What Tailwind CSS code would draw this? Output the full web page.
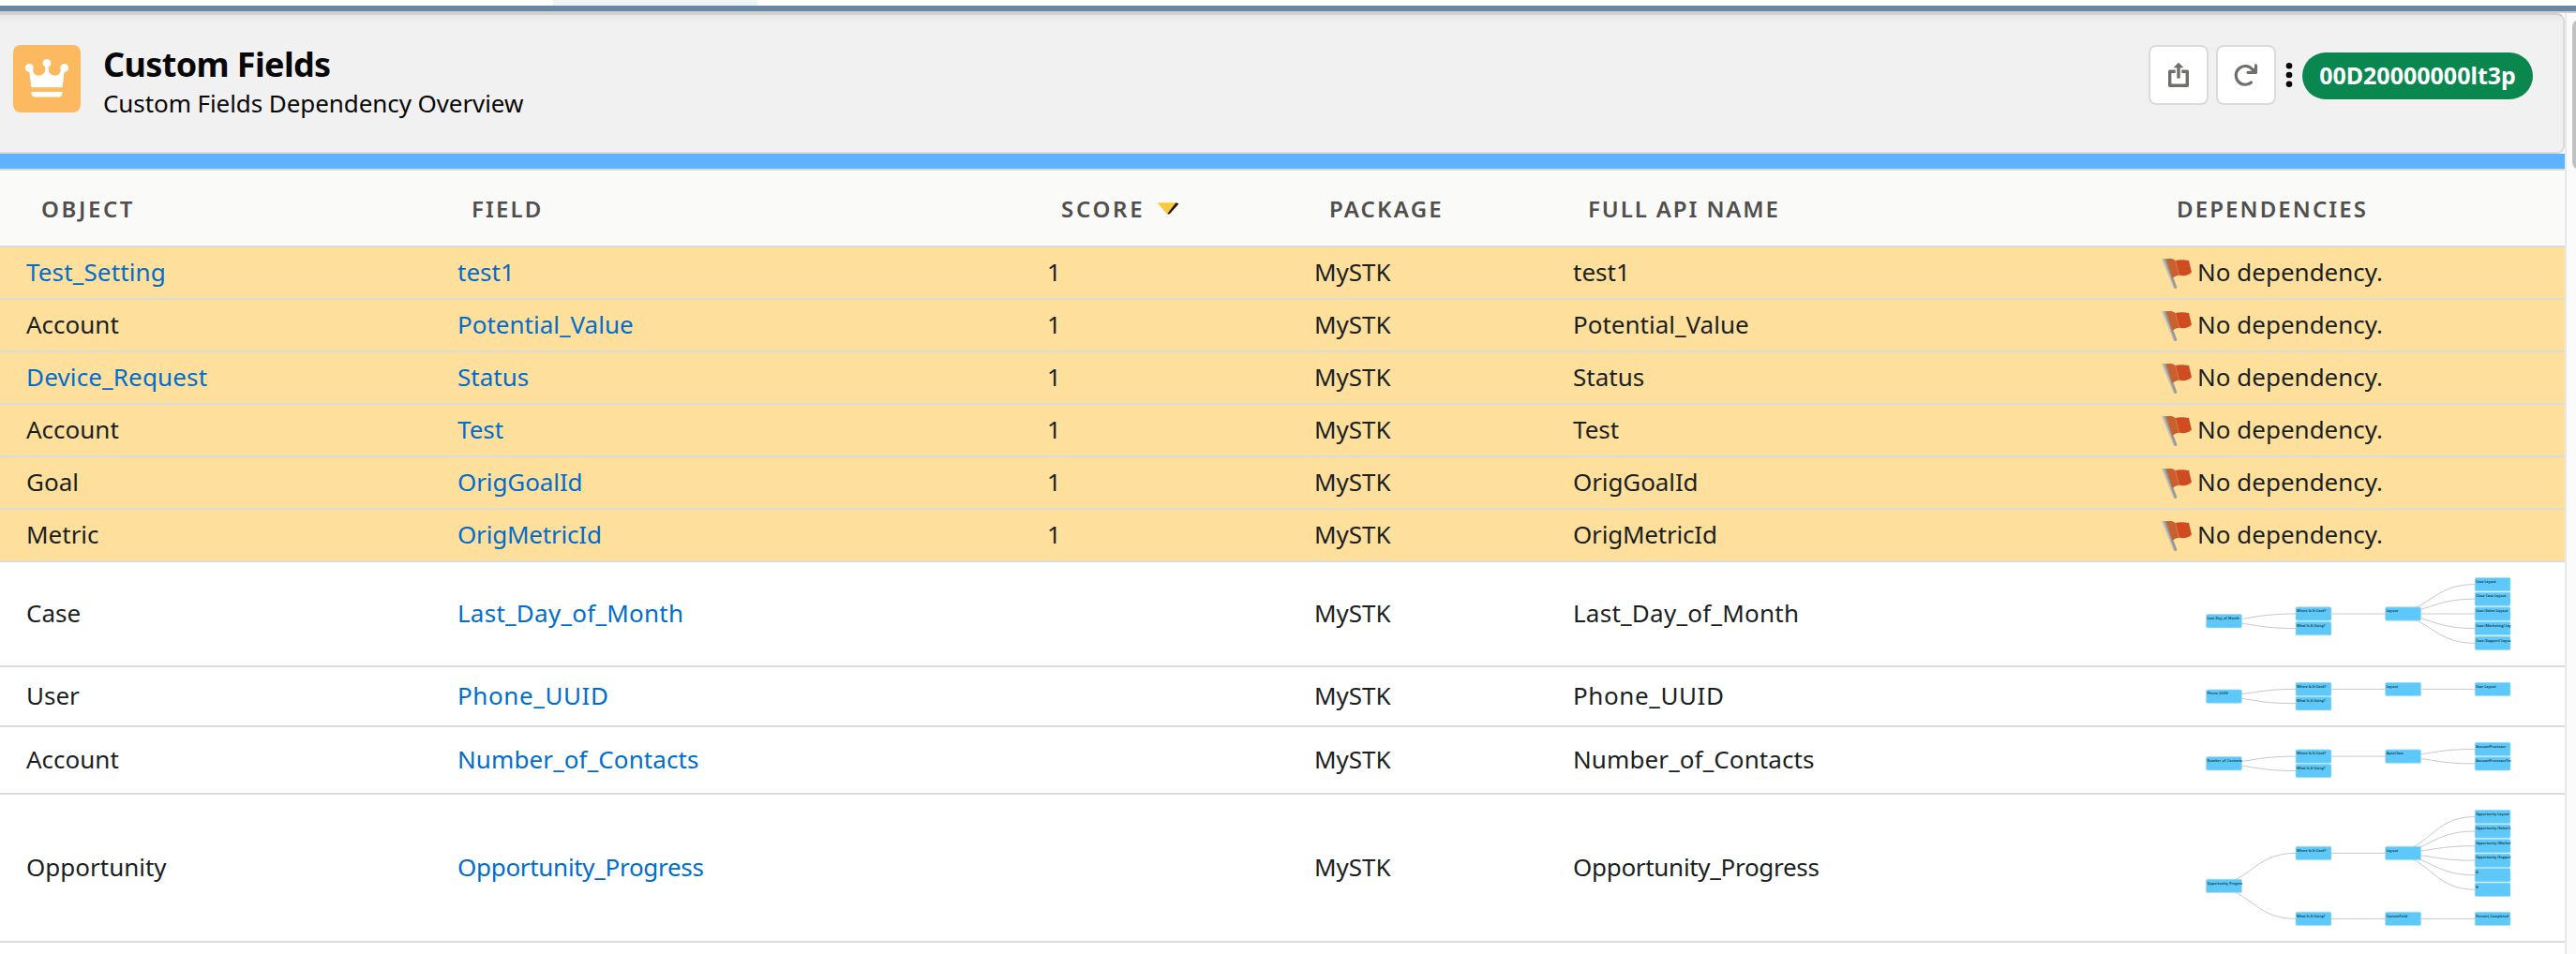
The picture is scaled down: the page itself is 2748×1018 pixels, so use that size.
<!DOCTYPE html>
<html lang="en">
<head>
<meta charset="utf-8">
<title>Custom Fields</title>
<script src="https://cdn.jsdelivr.net/npm/@tailwindcss/browser@4"></script>
</head>
<body class="flex h-[1018px] w-[2748px] flex-col overflow-hidden bg-white font-['Noto_Sans',sans-serif] text-[26px] text-[#1b1f22]">
  <!-- Tab strip edge -->
  <div class="h-1.5 shrink-0 pl-[590px]"><div class="h-full w-[218px] bg-[#eef3f6]"></div></div>
  <div class="h-1.5 shrink-0 bg-[#6888a3]"></div>
  <div class="h-0.5 shrink-0 bg-[#d2d0cf]"></div>

  <div class="flex min-h-0 flex-1">
    <main class="w-[2736px] shrink-0 overflow-hidden">
      <header class="flex h-[150px] items-start justify-between rounded-r-lg border-y-2 border-r-2 border-t-[#d2d0cf] border-r-[#dddbda] border-b-[#dddbda] bg-[#f1f1f1] bg-linear-to-b from-[#e9e9e9] from-0% to-[#f1f1f1] to-[10px] pt-8 pr-8 pl-3.5 text-[#080707]">
        <div class="flex">
          <svg class="size-[72px] rounded-lg bg-[#fcb95f]" viewBox="0 0 72 72" fill="#fff">
            <circle cx="17.3" cy="24.4" r="4.4"/><circle cx="36" cy="19.4" r="4.4"/><circle cx="54.7" cy="24.4" r="4.4"/>
            <path d="M17 26 L21 27 C22 31 24 32.7 26.8 32.7 C31.500 32.400 34.300 29.800 34.300 26.500 V22 H37.700 V26.500 C37.700 29.800 40.500 32.400 45.200 32.700 C48 32.700 50 31 51 27 L55 26 L52.700 44.500 Q52.600 45.300 51.800 45.300 H20.200 Q19.400 45.300 19.300 44.500 Z"/>
            <path d="M20.300 50 H51.700 Q52.700 50 52.600 51 Q52.200 55.600 48.700 55.600 H23.300 Q19.800 55.600 19.400 51 Q19.300 50 20.300 50 Z"/>
          </svg>
          <div class="pl-6">
            <h1 class="pt-px text-4xl leading-10 font-bold tracking-[-0.63px]">Custom Fields</h1>
            <p class="mt-[3px] leading-9 tracking-[-0.08px]">Custom Fields Dependency Overview</p>
          </div>
        </div>
        <div class="flex items-start">
          <button class="size-16 rounded-lg border-2 border-[#dddbda] bg-white">
            <svg class="size-[60px]" viewBox="2 2 60 60" fill="none" stroke="#706e6b" stroke-width="3.4" stroke-linejoin="round">
              <path d="M28.700 28.200 H22.700 V43.300 H41.300 V28.200 H35.300"/><path d="M32 23 V35.600"/>
              <path d="M32 18.700 L37.500 24.200 H26.500 Z" fill="#706e6b" stroke="none"/>
            </svg>
          </button>
          <button class="ml-2 size-16 rounded-lg border-2 border-[#dddbda] bg-white">
            <svg class="size-[60px]" viewBox="2 2 60 60" fill="none" stroke="#706e6b" stroke-width="3.1" stroke-linecap="round">
              <path d="M37.500 40 A9.900 9.900 0 1 1 38.500 25.800 L41.500 28.500"/>
              <path d="M42.500 21.700 V29.400 H34" stroke-linejoin="round"/>
              <path d="M42.500 29.400 L37.500 29.400 L38.500 25.800 L42 24 Z" fill="#706e6b" stroke="none"/>
            </svg>
          </button>
          <svg class="mt-[18px] ml-[10px] h-7 w-2" viewBox="0 0 8 28" fill="#080707"><circle cx="4" cy="4.300" r="3.300"/><circle cx="4" cy="14" r="3.300"/><circle cx="4" cy="23.700" r="3.300"/></svg>
          <span class="mt-2 ml-[10px] flex h-[50px] w-[246px] items-center justify-center rounded-full bg-[#0a864f] text-[25px] font-bold text-white">00D20000000lt3p</span>
        </div>
      </header>
      <div class="h-4 bg-[#5fb2fe]"></div>

      <!-- Column heads -->
      <div class="grid h-[84px] grid-cols-[460px_629px_285px_276px_629px_457px] items-center border-y-2 border-[#dddbda] bg-[#fafaf9] pt-0.5 text-2xl font-semibold text-[#514f4d]">
        <div class="pl-11 tracking-[2.6px]">OBJECT</div>
        <div class="pl-[43px] tracking-[2.1px]">FIELD</div>
        <div class="flex items-center pl-[43px] tracking-[2.7px]">SCORE
          <svg class="ml-[13px] h-4 w-6" viewBox="0 0 24 16"><path d="M16 4 L20.500 1.200 L23.500 2.500 L13.500 13.500 L11 13.300 Z" fill="#1d1603"/><path d="M0.500 1.200 H20.500 L11 13.500 Z" fill="#fdc93c"/></svg>
        </div>
        <div class="pl-11 tracking-[2.2px]">PACKAGE</div>
        <div class="pl-11 tracking-[1.9px]">FULL API NAME</div>
        <div class="pl-[43px] tracking-[2.1px]">DEPENDENCIES</div>
      </div>
      <div id="rows"></div>
    </main>
    <div class="flex-1 overflow-hidden border-l-2 border-[#e8e8e8] bg-[#fafafa] pt-[7px] pl-1.5">
      <div class="h-40 w-4 rounded-full bg-[#c1c1c1]"></div>
    </div>
  </div>

<script>
const FLAG = `<svg class="mt-px ml-[27px] size-8 shrink-0" viewBox="0 0 32 32"><path d="M0 0 H5 L16.500 31 Q14 33 12.800 31 Z" fill="#9a9a94"/><path d="M0 0 H2 L14 32 H12.800 Z" fill="#c9c6bc"/><path d="M5 0.500 Q10 -1 14.500 2 Q21 0.500 29 2 L32 14.500 Q26 20 18.500 17.500 Q14.500 18 11.500 20.500 Z" fill="#d04c20"/><path d="M5 0.500 Q10 -1 14.500 2 L18.500 17.500 Q14.500 18 11.500 20.500 Z" fill="#c9602f"/><path d="M14.500 2 L18.500 17.500" stroke="#dd7a50" stroke-width="1"/></svg>`;

// Each graph lists nodes as [depth, centre y, label, parent index].
const COL = [49.700, 145.200, 240.800, 336.300];
function graph(height, nodes) {
  let links = '', boxes = '';
  for (const [depth, y, label, parent] of nodes) {
    const x = COL[depth];
    if (parent !== undefined) {
      const px = COL[nodes[parent][0]], py = nodes[parent][1], mx = (px + x) / 2;
      links += `<path d="M${px} ${py} C${mx} ${py} ${mx} ${y} ${x} ${y}"/>`;
    }
    boxes += `<svg x="${x - 1}" y="${y - 8}" width="39.200" height="16"><rect x="0.800" y="0.800" width="38" height="14.400" rx="1.600" fill="#5ec9f8" stroke="#9fdefb" stroke-width="0.700"/><text x="1.900" y="6.300" font-size="3.600" font-weight="700" fill="#1c4a60">${label}</text></svg>`;
  }
  return `<svg class="ml-[25px]" width="400" height="${height}" viewBox="0 0 400 ${height}"><g fill="none" stroke="#c8c8c8" stroke-width="1">${links}</g>${boxes}</svg>`;
}
const USED = 'Where Is It Used?', USING = 'What Is It Using?';

const rows = [
  ['Test_Setting', 'test1', '', ''],
  ['Account', 'Potential_Value', '', ''],
  ['Device_Request', 'Status', '', ''],
  ['Account', 'Test', '', ''],
  ['Goal', 'OrigGoalId', '', 'tracking-[-0.1px]'],
  ['Metric', 'OrigMetricId', '', 'tracking-[-0.2px]'],
  ['Case', 'Last_Day_of_Month', 'h-28', 'tracking-[0.25px]', graph(78, [
    [0, 46.700, 'Last_Day_of_Month'], [1, 39, USED, 0], [1, 54.600, USING, 0], [2, 39, 'Layout', 1],
    [3, 7.600, 'Case Layout', 3], [3, 23.200, 'Close Case Layout', 3], [3, 39, 'Case (Sales) Layout', 3],
    [3, 54.600, 'Case (Marketing) Layout', 3], [3, 70.300, 'Case (Support) Layout', 3]])],
  ['User', 'Phone_UUID', 'h-16', 'tracking-[0.6px]', graph(30, [
    [0, 15.100, 'Phone_UUID'], [1, 7.400, USED, 0], [1, 22.700, USING, 0], [2, 7.400, 'Layout', 1], [3, 7.400, 'User Layout', 3]])],
  ['Account', 'Number_of_Contacts', 'h-[72px]', 'tracking-[0.1px]', graph(38, [
    [0, 22.700, 'Number_of_Contacts'], [1, 15.100, USED, 0], [1, 30.500, USING, 0], [2, 15.100, 'ApexClass', 1],
    [3, 7.400, 'AccountProcessor', 3], [3, 22.900, 'AccountProcessorTest', 3]])],
  ['Opportunity', 'Opportunity_Progress', 'h-[158px]', 'tracking-[-0.3px]', graph(124, [
    [0, 81.400, 'Opportunity_Progress'], [1, 46.400, USED, 0], [1, 116.400, USING, 0], [2, 46.400, 'Layout', 1],
    [3, 7.500, 'Opportunity Layout', 3], [3, 23, 'Opportunity (Sales) Layout', 3], [3, 38.700, 'Opportunity (Marketing)', 3],
    [3, 54.200, 'Opportunity (Support)', 3], [3, 69.800, 'A', 3], [3, 85.300, 'B', 3],
    [2, 116.400, 'CustomField', 2], [3, 116.400, 'Percent_Completed', 10]])],
];

document.getElementById('rows').innerHTML = rows.map(([object, field, height, tracking, deps]) => `
  <div class="grid grid-cols-[460px_629px_285px_276px_629px_457px] items-center border-b-2 border-[#dddbda] ${deps ? 'bg-white ' + height : 'bg-[#ffdf9c] h-14'}">
    <div class="pb-0.5 pl-7 ${object.includes('_') ? 'text-[#006dcc] tracking-[0.15px]' : ''}">${object}</div>
    <div class="pb-0.5 pl-7 text-[#006dcc] ${tracking}">${field}</div>
    <div class="pb-0.5 pl-7">${deps ? '' : '1'}</div>
    <div class="pb-0.5 pl-7">MySTK</div>
    <div class="pb-0.5 pl-7 ${tracking}">${field}</div>
    <div class="flex items-center">${deps || FLAG + '<span class="pb-0.5 pl-1.5">No dependency.</span>'}</div>
  </div>`).join('');
</script>
</body>
</html>
